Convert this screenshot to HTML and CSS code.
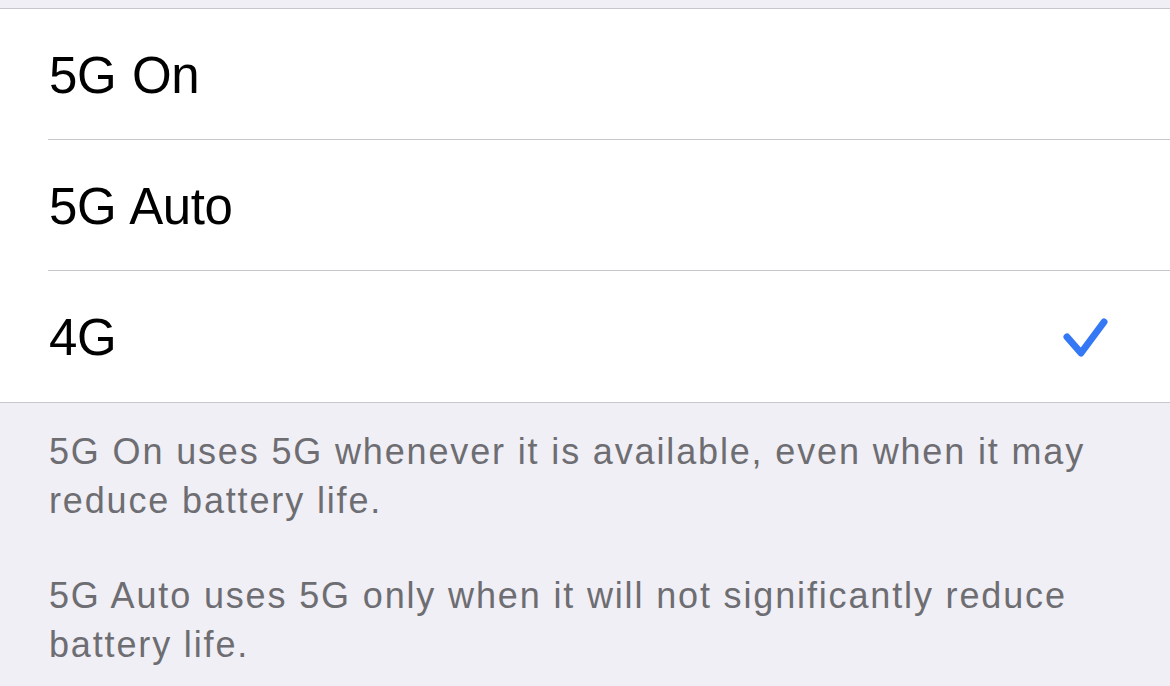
FILE: index.html
```html
<!DOCTYPE html>
<html>
<head>
<meta charset="utf-8">
<link rel="stylesheet" href="styles.css">
</head>
<body>
<div class="page">
  <div class="top-band"></div>
  <div class="group">
    <div class="row"><div class="row-inner"><span class="label">5G On</span></div></div>
    <div class="row"><div class="row-inner"><span class="label">5G Auto</span></div></div>
    <div class="row last"><div class="row-inner"><span class="label">4G</span>
      <svg class="check" width="50" height="50" viewBox="0 0 50 50"><path d="M7 23 L21 39 L44 8" fill="none" stroke="#3478f6" stroke-width="7" stroke-linecap="round" stroke-linejoin="round"/></svg>
    </div></div>
  </div>
  <div class="footer">
    <p class="note">5G On uses 5G whenever it is available, even when it may reduce battery life.</p>
    <p class="note">5G Auto uses 5G only when it will not significantly reduce battery life.</p>
  </div>
</div>
</body>
</html>
```

FILE: styles.css
```css
html, body {
  margin: 0;
  padding: 0;
  background: #f0eff5;
}
.page {
  width: 1170px;
  height: 686px;
  overflow: hidden;
  font-family: "Liberation Sans", Arial, sans-serif;
}
.top-band {
  height: 8px;
  background: #f0eff5;
  border-bottom: 1px solid #c8c7cc;
}
.group {
  background: #ffffff;
  border-bottom: 1px solid #c8c7cc;
}
.row {
  padding-left: 48px;
}
.row-inner {
  height: 130px;
  display: flex;
  align-items: center;
  justify-content: space-between;
  border-bottom: 1px solid #c8c7cc;
  padding-right: 60px;
}
.row.last .row-inner {
  border-bottom: none;
  height: 131px;
}
.label {
  font-size: 51px;
  color: #000;
  letter-spacing: -0.4px;
  word-spacing: 2px;
  padding-left: 1px;
  padding-top: 2px;
}
.check {
  display: block;
  margin-top: 4px;
}
.footer {
  padding: 24px 40px 0 49px;
}
.note {
  margin: 0 0 46px 0;
  font-size: 36px;
  line-height: 49px;
  color: #6d6d72;
  letter-spacing: 1.85px;
}
```
